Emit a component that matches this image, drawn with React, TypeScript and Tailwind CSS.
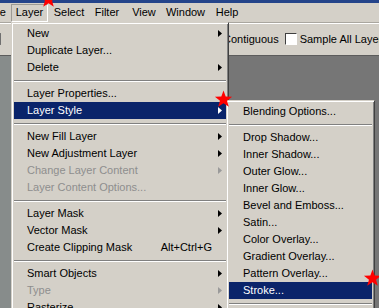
import React from 'react';

const font = { fontFamily: '"Liberation Sans", Arial, sans-serif' };

type Entry =
  | { sep: true }
  | { label: string; sub?: boolean; shortcut?: string; disabled?: boolean; active?: boolean };

const layerMenu: Entry[] = [
  { label: 'New', sub: true },
  { label: 'Duplicate Layer...' },
  { label: 'Delete', sub: true },
  { sep: true },
  { label: 'Layer Properties...' },
  { label: 'Layer Style', sub: true, active: true },
  { sep: true },
  { label: 'New Fill Layer', sub: true },
  { label: 'New Adjustment Layer', sub: true },
  { label: 'Change Layer Content', sub: true, disabled: true },
  { label: 'Layer Content Options...', disabled: true },
  { sep: true },
  { label: 'Layer Mask', sub: true },
  { label: 'Vector Mask', sub: true },
  { label: 'Create Clipping Mask', shortcut: 'Alt+Ctrl+G' },
  { sep: true },
  { label: 'Smart Objects', sub: true },
  { label: 'Type', sub: true, disabled: true },
  { label: 'Rasterize', sub: true },
  { sep: true },
  { label: 'New Layer Based Slice' },
];

const styleMenu: Entry[] = [
  { label: 'Blending Options...' },
  { sep: true },
  { label: 'Drop Shadow...' },
  { label: 'Inner Shadow...' },
  { label: 'Outer Glow...' },
  { label: 'Inner Glow...' },
  { label: 'Bevel and Emboss...' },
  { label: 'Satin...' },
  { label: 'Color Overlay...' },
  { label: 'Gradient Overlay...' },
  { label: 'Pattern Overlay...' },
  { label: 'Stroke...', active: true },
  { sep: true },
  { label: 'Copy Layer Style' },
];

function Arrow({ color }: { color: string }) {
  return (
    <svg width="4" height="7" viewBox="0 0 4 7" className="block">
      <path d="M0 0L4 3.5L0 7Z" fill={color} />
    </svg>
  );
}

function Star({ size = 19 }: { size?: number }) {
  const pts: string[] = [];
  for (let i = 0; i < 10; i++) {
    const r = i % 2 === 0 ? 9.5 : 3.9;
    const a = (Math.PI / 5) * i - Math.PI / 2;
    pts.push(`${(10 + r * Math.cos(a)).toFixed(2)},${(10 + r * Math.sin(a)).toFixed(2)}`);
  }
  return (
    <svg width={size} height={size} viewBox="0 0 20 20" className="block">
      <polygon points={pts.join(' ')} fill="#ff0000" />
    </svg>
  );
}

function Menu({ items, pl }: { items: Entry[]; pl: string }) {
  return (
    <div className="flex flex-col">
      {items.map((it, i) => {
        if ('sep' in it) {
          return (
            <div key={i} className="h-[9px] pt-[4px]">
              <div className="h-[1px] bg-[#808080]" />
              <div className="h-[1px] bg-white" />
            </div>
          );
        }
        const color = it.active ? 'text-white bg-[#0a246a]' : it.disabled ? 'text-[#8e8e8e]' : 'text-black';
        const arrowColor = it.active ? '#ffffff' : it.disabled ? '#9a9a9a' : '#000000';
        return (
          <div key={i} className={`flex h-[17px] items-center pr-[4px] leading-[17px] ${pl} ${color}`}>
            <span className="flex-1 whitespace-nowrap">{it.label}</span>
            {it.shortcut && <span className="whitespace-nowrap">{it.shortcut}</span>}
            <span className="flex w-[10px] justify-end">{it.sub && <Arrow color={arrowColor} />}</span>
          </div>
        );
      })}
    </div>
  );
}

export default function App() {
  return (
    <div className="relative h-[308px] w-[379px] overflow-hidden bg-[#d4d0c8] text-[11px]" style={font}>
      {/* title bar remnant */}
      <div className="h-[3px] bg-[#24448a]" />

      {/* menu bar */}
      <div className="flex h-[19px] items-center text-black">
        <span className="ml-[-30px] w-[41px] text-center">Image</span>
        <span className="flex h-[18px] w-[37px] items-center justify-center border border-t-[#9c9a94] border-l-[#9c9a94] border-r-white border-b-white">
          Layer
        </span>
        <span className="w-[42px] text-center">Select</span>
        <span className="w-[34px] text-center">Filter</span>
        <span className="w-[40px] text-center">View</span>
        <span className="w-[43px] text-center">Window</span>
        <span className="w-[40px] text-center">Help</span>
      </div>

      {/* options bar */}
      <div className="flex h-[34px] items-center border-t border-t-[#a9a69f] border-b border-b-[#5c5c5c] shadow-[inset_0_1px_0_#ffffff]">
        <div className="h-[12px] w-[9px] rounded-r-[2px] border border-l-0 border-[#6f6f6f] bg-[#eeeeea]" />
        <span className="ml-[222px] whitespace-nowrap text-black">Contiguous</span>
        <span className="ml-[6px] h-[12px] w-[12px] shrink-0 border border-t-[#404040] border-l-[#404040] border-r-white border-b-white bg-white" />
        <span className="ml-[3px] whitespace-nowrap text-black">Sample All Layers</span>
      </div>

      {/* canvas area */}
      <div className="flex h-[252px]">
        <div className="w-[60px] bg-[#878c8b]" />
        <div className="flex-1 bg-[#767676]" />
      </div>

      {/* Layer menu */}
      <div className="absolute left-[11px] top-[22px] w-[218px] border border-t-[#d4d0c8] border-l-[#d4d0c8] border-r-[#404040] border-b-[#404040] bg-[#d4d0c8] p-[2px] shadow-[inset_1px_1px_0_#ffffff,inset_-1px_-1px_0_#808080]">
        <Menu items={layerMenu} pl="pl-[13px]" />
      </div>

      {/* Layer Style submenu */}
      <div className="absolute left-[226px] top-[100px] w-[149px] border border-t-[#d4d0c8] border-l-[#d4d0c8] border-r-[#404040] border-b-[#404040] bg-[#d4d0c8] p-[2px] shadow-[inset_1px_1px_0_#ffffff,inset_-1px_-1px_0_#808080]">
        <Menu items={styleMenu} pl="pl-[14px]" />
      </div>

      {/* red markers */}
      <div className="absolute left-[39px] top-[-10px]">
        <Star />
      </div>
      <div className="absolute left-[214px] top-[90px]">
        <Star />
      </div>
      <div className="absolute left-[363px] top-[269px]">
        <Star />
      </div>
    </div>
  );
}
